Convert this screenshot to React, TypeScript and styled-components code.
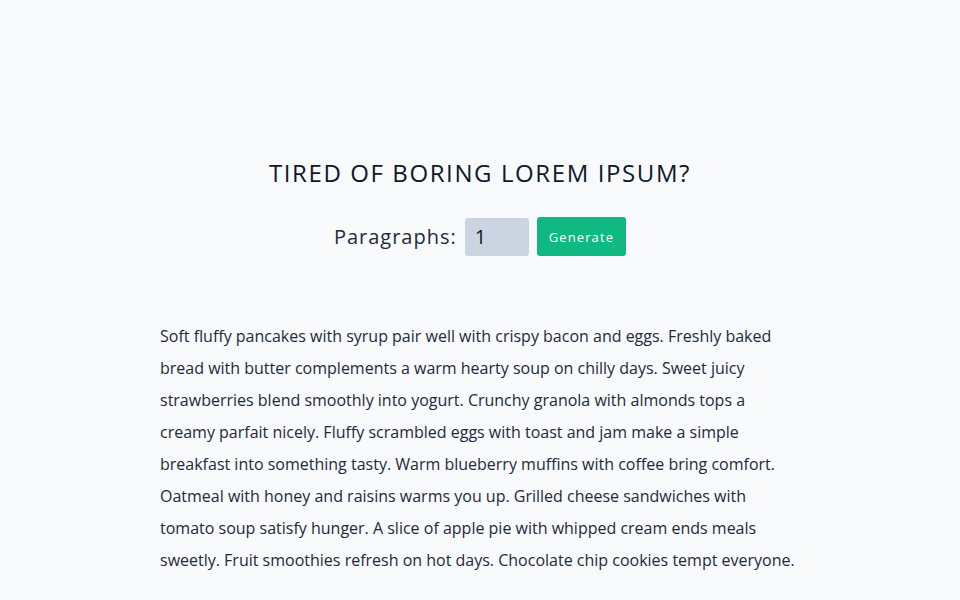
import styled, { createGlobalStyle } from "styled-components";

const GlobalStyle = createGlobalStyle`
  html, body {
    margin: 0;
    padding: 0;
    background: #f8fafc;
    font-family: "Open Sans", sans-serif;
    color: #1e293b;
  }
`;

const Page = styled.main`
  min-height: 600px;
  display: flex;
  flex-direction: column;
  align-items: center;
  padding-top: 157px;
  box-sizing: border-box;
`;

const Title = styled.h1`
  font-size: 24px;
  font-weight: 400;
  letter-spacing: 1.6px;
  text-transform: uppercase;
  margin: 0;
  line-height: 32px;
  color: #0f172a;
`;

const Form = styled.form`
  display: flex;
  align-items: center;
  gap: 8px;
  margin-top: 28px;
`;

const Label = styled.label`
  font-size: 20px;
  letter-spacing: 1px;
`;

const NumberInput = styled.input`
  width: 64px;
  height: 38px;
  box-sizing: border-box;
  border: none;
  border-radius: 3px;
  background: #cbd5e1;
  font-family: "Open Sans", sans-serif;
  font-size: 20px;
  color: #0f172a;
  padding: 0 10px;
  outline: none;
`;

const Button = styled.button`
  height: 39px;
  padding: 0 12px;
  border: none;
  border-radius: 3px;
  background: #10b981;
  color: #ffffff;
  font-family: "Open Sans", sans-serif;
  font-size: 13px;
  letter-spacing: 1.1px;
  cursor: pointer;
`;

const Text = styled.p`
  width: 640px;
  margin: 64px 0 0;
  font-size: 16px;
  line-height: 32px;
  color: #1e293b;
`;

export default function App() {
  return (
    <>
      <GlobalStyle />
      <Page>
        <Title>Tired of boring lorem ipsum?</Title>
        <Form onSubmit={(e) => e.preventDefault()}>
          <Label htmlFor="amount">Paragraphs:</Label>
          <NumberInput id="amount" type="text" defaultValue="1" />
          <Button type="submit">Generate</Button>
        </Form>
        <Text>
          Soft fluffy pancakes with syrup pair well with crispy bacon and eggs. Freshly baked
          bread with butter complements a warm hearty soup on chilly days. Sweet juicy
          strawberries blend smoothly into yogurt. Crunchy granola with almonds tops a
          creamy parfait nicely. Fluffy scrambled eggs with toast and jam make a simple
          breakfast into something tasty. Warm blueberry muffins with coffee bring comfort.
          Oatmeal with honey and raisins warms you up. Grilled cheese sandwiches with
          tomato soup satisfy hunger. A slice of apple pie with whipped cream ends meals
          sweetly. Fruit smoothies refresh on hot days. Chocolate chip cookies tempt everyone.
        </Text>
      </Page>
    </>
  );
}
